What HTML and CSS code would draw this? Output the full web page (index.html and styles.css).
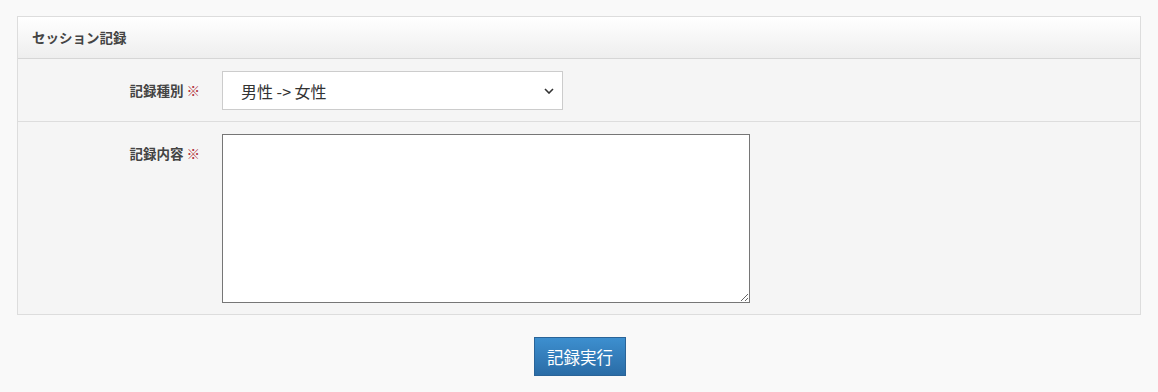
FILE: index.html
```html
<!DOCTYPE html>
<html lang="ja">
<head>
    <meta charset="UTF-8">
    <meta name="viewport" content="width=device-width, initial-scale=1.0">
    <title>セッション記録</title>
    <link rel="stylesheet" href="styles.css">
</head>
<body>
    <form class="record-form">
        <div class="panel">
            <div class="panel-heading">セッション記録</div>

            <div class="form-row">
                <label class="form-label" for="recordType">記録種別 <span class="req">※</span></label>
                <div class="form-field select-wrap">
                    <select id="recordType" name="recordType" class="select">
                        <option value="m2f">男性 -&gt; 女性</option>
                        <option value="f2m">女性 -&gt; 男性</option>
                    </select>
                    <svg class="chevron" width="10" height="6" viewBox="0 0 10 6"><path d="M1 1 L5 5 L9 1" fill="none" stroke="#333" stroke-width="1.6"/></svg>
                </div>
            </div>

            <div class="form-row">
                <label class="form-label" for="recordBody">記録内容 <span class="req">※</span></label>
                <div class="form-field">
                    <textarea id="recordBody" name="recordBody" class="textarea"></textarea>
                </div>
            </div>
        </div>

        <div class="actions">
            <button type="submit" class="btn-primary">記録実行</button>
        </div>
    </form>
</body>
</html>
```

FILE: styles.css
```css
body { margin: 0; padding: 16px 17px; background: #f9f9f9; font-family: "Noto Sans CJK JP", "Noto Sans", sans-serif; color: #333; }
.panel { border: 1px solid #dddddd; background: #f5f5f5; }
.panel-heading { height: 41px; line-height: 41px; padding: 0 14px; font-size: 13.5px; font-weight: bold; color: #444; background: linear-gradient(#ffffff, #eeeeee); border-bottom: 1px solid #d6d6d6; }
.form-row { display: flex; gap: 22px; padding: 12px 0 11px; border-bottom: 1px solid #dddddd; }
.form-row:last-child { border-bottom: none; }
.form-label { width: 182px; text-align: right; font-size: 13.5px; font-weight: bold; line-height: 38px; color: #444; }
.req { color: #b0303c; font-weight: normal; }
.select-wrap { position: relative; }
.select { appearance: none; -webkit-appearance: none; display: block; width: 341px; height: 39px; padding: 0 18px; font-family: inherit; font-size: 16px; color: #333; background: #fff; border: 1px solid #cccccc; border-radius: 0; }
.chevron { position: absolute; right: 9px; top: 17px; pointer-events: none; }
.textarea { display: block; width: 528px; height: 169px; box-sizing: border-box; margin: 0; border: 1px solid #767676; background: #fff; }
.actions { display: flex; justify-content: center; padding: 22px 0 0 2px; }
.btn-primary { width: 92px; height: 39px; padding: 0; font-family: inherit; font-size: 16.5px; color: #fff; background: linear-gradient(#3d8fcf, #2a6ca6); border: 1px solid #2a6498; cursor: pointer; }
```
